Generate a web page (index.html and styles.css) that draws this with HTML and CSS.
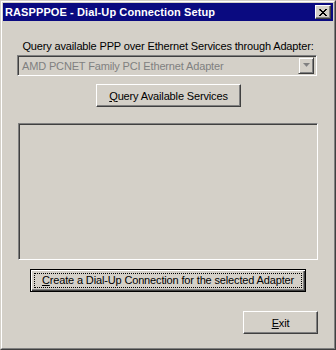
FILE: index.html
```html
<!DOCTYPE html>
<html lang="en">
<head>
    <meta charset="UTF-8">
    <title>RASPPPOE - Dial-Up Connection Setup</title>
    <link rel="stylesheet" href="styles.css">
</head>
<body>
    <div class="window">
        <div class="frame">
            <div class="titlebar">
                <span class="title">RASPPPOE - Dial-Up Connection Setup</span>
                <button class="close" type="button">
                    <svg width="8" height="7" viewBox="0 0 8 7">
                        <path d="M0 0h2v1h1v1h2v-1h1v-1h2v1h-1v1h-1v1h-1v1h1v1h1v1h1v1h-2v-1h-1v-1h-2v1h-1v1h-2v-1h1v-1h1v-1h1v-1h-1v-1h-1z" fill="#000"/>
                    </svg>
                </button>
            </div>
            <div class="client">
                <div class="label">Query available PPP over Ethernet Services through Adapter:</div>
                <div class="combo">
                    <span class="combo-text">AMD PCNET Family PCI Ethernet Adapter</span>
                    <span class="combo-btn">
                        <svg width="7" height="5" viewBox="0 0 7 5">
                            <path d="M1 1h5l-2.5 3z" fill="#fff"/>
                            <path d="M0 0h7l-3.5 4z" fill="#808080"/>
                        </svg>
                    </span>
                </div>
                <button class="btn btn-query" type="button"><u>Q</u>uery Available Services</button>
                <div class="listbox"></div>
                <button class="btn btn-default btn-create" type="button"><span class="focus"><u>C</u>reate a Dial-Up Connection for the selected Adapter</span></button>
                <button class="btn btn-exit" type="button"><u>E</u>xit</button>
            </div>
        </div>
    </div>
</body>
</html>
```

FILE: styles.css
```css
* {
    box-sizing: border-box;
}
body {
    margin: 0;
    font-family: "Liberation Sans", Arial, sans-serif;
    font-size: 11px;
    letter-spacing: -0.15px;
    background: #d4d0c8;
}
.window {
    width: 336px;
    height: 350px;
    border: 1px solid;
    border-color: #d4d0c8 #404040 #404040 #d4d0c8;
    background: #d4d0c8;
}
.frame {
    height: 100%;
    border: 1px solid;
    border-color: #fff #808080 #808080 #fff;
    padding: 1px;
    display: flex;
    flex-direction: column;
}
.titlebar {
    height: 18px;
    background: #0a0a80;
    display: flex;
    align-items: center;
    padding: 0 2px 0 2px;
}
.title {
    flex: 1;
    color: #fff;
    font-weight: bold;
    font-size: 11px;
    letter-spacing: 0.1px;
}
.close {
    width: 16px;
    height: 14px;
    padding: 0;
    background: #d4d0c8;
    border: 1px solid;
    border-color: #fff #404040 #404040 #fff;
    box-shadow: inset -1px -1px #808080;
    display: flex;
    align-items: center;
    justify-content: center;
}
.client {
    flex: 1;
    display: flex;
    flex-direction: column;
    align-items: flex-start;
}
.label {
    margin-top: 19px;
    line-height: 13px;
    align-self: center;
    color: #000;
}
.combo {
    margin: 2px 0 0 14px;
    width: 300px;
    height: 21px;
    border: 1px solid;
    border-color: #808080 #fff #fff #808080;
    box-shadow: inset 1px 1px #404040, inset -1px -1px #d4d0c8;
    display: flex;
    align-items: center;
    padding: 2px;
}
.combo-text {
    flex: 1;
    color: #808080;
    padding-left: 2px;
}
.combo-btn {
    width: 16px;
    height: 17px;
    border: 1px solid;
    border-color: #d4d0c8 #404040 #404040 #d4d0c8;
    box-shadow: inset 1px 1px #fff, inset -1px -1px #808080;
    display: flex;
    align-items: center;
    justify-content: center;
}
.btn {
    height: 23px;
    padding: 0;
    font-family: "Liberation Sans", Arial, sans-serif;
    font-size: 11px;
    letter-spacing: -0.15px;
    color: #000;
    background: #d4d0c8;
    border: 1px solid;
    border-color: #fff #404040 #404040 #fff;
    box-shadow: inset -1px -1px #808080;
}
.btn-query {
    margin: 8px 0 0 93px;
    width: 145px;
}
.listbox {
    margin: 16px 0 0 15px;
    width: 300px;
    height: 137px;
    border: 1px solid;
    border-color: #808080 #fff #fff #808080;
    box-shadow: inset 1px 1px #404040, inset -1px -1px #d4d0c8;
}
.btn-default {
    border: 1px solid #000;
    box-shadow: inset 1px 1px #fff, inset -1px -1px #404040, inset -2px -2px #808080;
    padding: 3px;
}
.btn-create {
    margin: 9px 0 0 27px;
    width: 276px;
}
.focus {
    display: block;
    height: 100%;
    border: 1px dotted #000;
    line-height: 13px;
}
.btn-exit {
    margin: 19px 0 0 240px;
    width: 75px;
}
```
